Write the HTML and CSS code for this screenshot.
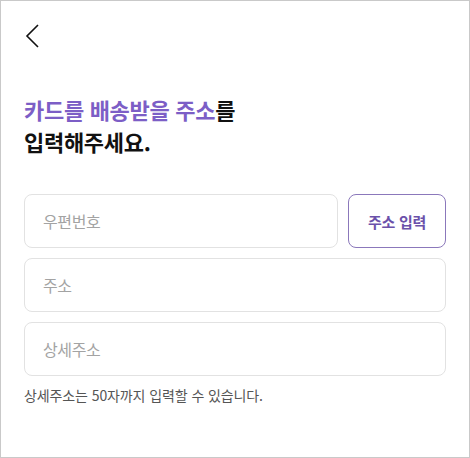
FILE: index.html
```html
<!DOCTYPE html>
<html lang="ko">
<head>
    <meta charset="UTF-8">
    <meta name="viewport" content="width=device-width, initial-scale=1.0">
    <title>배송 주소 입력</title>
    <link rel="stylesheet" href="styles.css">
</head>
<body>
    <div class="page">
        <!-- Back -->
        <button type="button" class="back-btn" aria-label="뒤로">
            <svg width="14" height="24" viewBox="0 0 14 24">
                <path d="M13 1 L2 12 L13 23" fill="none" stroke="#111" stroke-width="1.6" stroke-linejoin="miter"/>
            </svg>
        </button>

        <h1 class="title"><span class="accent">카드를 배송받을 주소</span>를<br>입력해주세요.</h1>

        <div class="address-form">
            <div class="zip-row">
                <input type="text" class="field" placeholder="우편번호">
                <button type="button" class="zip-btn">주소 입력</button>
            </div>
            <input type="text" class="field" placeholder="주소">
            <input type="text" class="field" placeholder="상세주소">
            <p class="hint">상세주소는 50자까지 입력할 수 있습니다.</p>
        </div>
    </div>
</body>
</html>
```

FILE: styles.css
```css
body {
    margin: 0;
    font-family: "Noto Sans CJK KR", "Noto Sans", sans-serif;
    background: #fff;
}

.page {
    width: 470px;
    height: 458px;
    box-sizing: border-box;
    border: 1px solid #c9c9c9;
    padding: 23px 23px 0;
}

.back-btn {
    display: block;
    width: 24px;
    height: 24px;
    padding: 0 0 0 1px;
    border: none;
    background: none;
    cursor: pointer;
}

.back-btn svg {
    display: block;
}

.title {
    margin: 45px 0 0;
    font-size: 22px;
    font-weight: 700;
    line-height: 32px;
    letter-spacing: -0.3px;
    color: #111;
}

.title .accent {
    color: #7c5ec6;
}

.address-form {
    margin-top: 37px;
    display: flex;
    flex-direction: column;
    gap: 10px;
}

.zip-row {
    display: flex;
    gap: 10px;
}

.zip-row .field {
    flex: 1;
    min-width: 0;
}

.field {
    height: 54px;
    box-sizing: border-box;
    padding: 0 18px;
    border: 1px solid #e2e2e2;
    border-radius: 8px;
    font-family: inherit;
    font-size: 16px;
    letter-spacing: -0.4px;
    color: #222;
    outline: none;
}

.field::placeholder {
    color: #a3a3a3;
}

.zip-btn {
    width: 98px;
    height: 54px;
    border: 1px solid #8b78bb;
    border-radius: 8px;
    background: #fff;
    font-family: inherit;
    font-size: 15px;
    font-weight: 700;
    letter-spacing: -0.3px;
    color: #6b51aa;
    cursor: pointer;
}

.hint {
    margin: -1px 0 0;
    font-size: 14px;
    line-height: 20px;
    letter-spacing: -0.1px;
    color: #555;
}
```
